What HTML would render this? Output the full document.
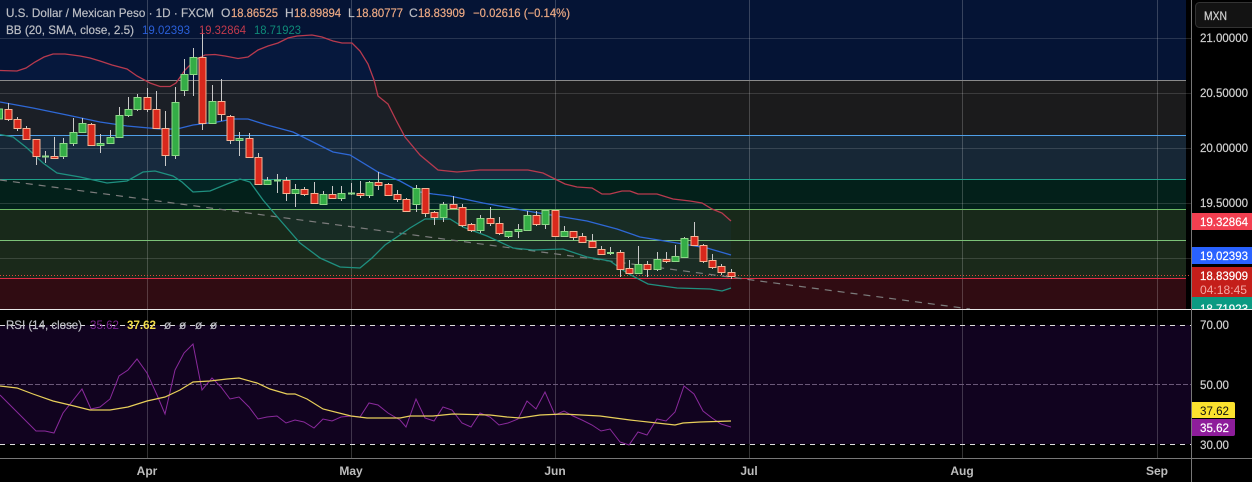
<!DOCTYPE html>
<html><head><meta charset="utf-8"><style>
html,body{margin:0;padding:0;background:#000;width:1252px;height:482px;overflow:hidden}
svg{display:block}
text{font-family:"Liberation Sans",sans-serif;font-size:12px}
.g{fill:#bcbec4;stroke:#bcbec4;stroke-width:.2}.o{fill:#eaa883;stroke:#eaa883;stroke-width:.2}.a{fill:#d0d0d0;stroke:#d0d0d0;stroke-width:.2}.w{fill:#fff;stroke:#fff;stroke-width:.2}
.t{fill:#bdbdbd;font-weight:bold;text-anchor:middle}
</style></head><body>
<svg width="1252" height="482" viewBox="0 0 1252 482" xmlns="http://www.w3.org/2000/svg">
<rect width="1252" height="482" fill="#000"/>
<!-- bands -->
<rect x="0" y="0" width="1186" height="80" fill="#051435"/>
<rect x="0" y="80" width="1186" height="55" fill="#1b1b1c"/>
<rect x="0" y="135" width="1186" height="44" fill="#172736"/>
<rect x="0" y="179" width="1186" height="30" fill="#03201a"/>
<rect x="0" y="209" width="1186" height="31" fill="#18291a"/>
<rect x="0" y="240" width="1186" height="38" fill="#1a291a"/>
<rect x="0" y="278" width="1186" height="31" fill="#300c12"/>
<rect x="0" y="325" width="1191" height="119" fill="#11031f"/>
<!-- BB fill -->
<polygon fill="#2a6ad0" fill-opacity=".06" points="0,70.5 17,71 26,68 35,62 44,57 53,54 65,54 80,56 90,58 100,61 112,65 127,69 137,76 150,83 160,86.5 170,86.5 176,83 185,70 195,60 205,55 215,54.5 225,56 238,58.5 248,57 258,50 268,46 278,43 288,38 297,36 312,35 322,37 333,41 342,43 352,43 360,51 368,64 374,80 378,96 388,104 396,120 405,137 420,155 438,170 457,172 480,170 528,170 543,173 557,180 565,184 577,187 592,188 602,194 610,194 622,191 630,191 638,194 657,194 673,199 690,201 702,203 712,209 722,213 731,221 731,288 722,291 710,289 677,288 648,284 627,273 610,261 587,257 563,249 533,250 513,248 487,236 463,227 450,219 425,219 410,228 400,235 385,245 372,258 360,268 340,267 320,258 300,243 280,220 263,200 250,182 240,179 227,184 210,191 193,192 182,182 173,176 155,171 143,172 127,181 107,183 80,177 57,173 43,163 27,148 13,137 0,134.5"/>
<!-- grid -->
<g stroke="#fff" stroke-opacity=".14" stroke-width="1" fill="none">
<path d="M0 38.5H1191M0 93.5H1191M0 148.5H1191M0 203.5H1191M0 258.5H1191"/>
<path d="M147.5 0V458M351.5 0V458M555.5 0V458M749.5 0V458M962.5 0V458M1157.5 0V458" stroke-opacity=".2"/>
</g>
<!-- fib lines -->
<g fill="none" stroke-width="1">
<path d="M0 80.5H1186" stroke="#8a8a8a"/>
<path d="M0 135.5H1186" stroke="#4f9fe8"/>
<path d="M0 179.5H1186" stroke="#1fa08a"/>
<path d="M0 209.5H1186" stroke="#6cb865"/>
<path d="M0 240.5H1186" stroke="#7cc278"/>
<path d="M0 278.5H1186" stroke="#e02f48"/>
<path d="M0 275.5H1191" stroke="#d8483c" stroke-dasharray="1 2"/>
<path d="M0 180L970 309" stroke="#7c7c7c" stroke-width="1.2" stroke-dasharray="7 6"/>
</g>
<!-- BB lines -->
<g fill="none" stroke-width="1.3">
<polyline stroke="#b83a4e" points="0,70.5 17,71 26,68 35,62 44,57 53,54 65,54 80,56 90,58 100,61 112,65 127,69 137,76 150,83 160,86.5 170,86.5 176,83 185,70 195,60 205,55 215,54.5 225,56 238,58.5 248,57 258,50 268,46 278,43 288,38 297,36 312,35 322,37 333,41 342,43 352,43 360,51 368,64 374,80 378,96 388,104 396,120 405,137 420,155 438,170 457,172 480,170 528,170 543,173 557,180 565,184 577,187 592,188 602,194 610,194 622,191 630,191 638,194 657,194 673,199 690,201 702,203 712,209 722,213 731,221"/>
<polyline stroke="#2e68d6" points="0,102 33,108 67,115 100,122 127,126 160,129 177,129 193,125 217,122 233,119 248,119 267,125 293,132 333,152 350,155 378,172 400,181 420,192 433,194 450,196 483,203 533,212 587,221 617,229 640,237 677,243 707,248 731,255"/>
<polyline stroke="#1f9080" points="0,134.5 13,137 27,148 43,163 57,173 80,177 107,183 127,181 143,172 155,171 173,176 182,182 193,192 210,191 227,184 240,179 250,182 263,200 280,220 300,243 320,258 340,267 360,268 372,258 385,245 400,235 410,228 425,219 450,219 463,227 487,236 513,248 533,250 563,249 587,257 610,261 627,273 648,284 677,288 710,289 722,291 731,288"/>
</g>
<!-- wicks -->
<path fill="none" stroke="#c9c9c9" stroke-width="1" d="M8.5 103V121M17.5 117V131M26.5 126V140M36.5 139V165M45.5 151V163M54.5 137V159M63.5 138V159M73.5 118V146M82.5 118V133M91.5 123V146M100.5 134V153M110.5 130V144M119.5 107V138M128.5 97V117M137.5 94V111M147.5 88V112M156.5 91V129M165.5 111V166M175.5 87V159M184.5 59V96M193.5 48V96M202.5 29V130M212.5 85V124M221.5 79V121M230.5 115V144M239.5 132V156M249.5 133V158M258.5 153V185M267.5 177V185M277.5 174V193M286.5 177V201M295.5 184V207M304.5 187V196M314.5 182V204M323.5 191V205M332.5 186V199M341.5 186V201M351.5 183V195M360.5 181V198M369.5 181V198M378.5 172V190M388.5 183V196M397.5 190V202M406.5 198V212M416.5 185V212M425.5 188V217M434.5 211V225M443.5 202V222M453.5 196V209M462.5 204V227M471.5 223V232M480.5 215V233M490.5 207V226M499.5 217V235M508.5 231V238M518.5 224V238M527.5 211V230M536.5 211V226M545.5 210V229M555.5 210V237M564.5 226V237M573.5 231V240M582.5 233V243M592.5 234V248M601.5 246V255M610.5 247V255M620.5 250V277M629.5 260V274M638.5 246V273M647.5 261V277M657.5 252V271M666.5 252V263M675.5 245V261M684.5 237V258M694.5 222V246M703.5 244V263M712.5 254V269M721.5 264V275M731.5 269V279"/>
<!-- green bodies -->
<path fill="#34ad46" stroke="#8ed888" stroke-width="1" d="M-3.5 109h6v10h-6zM60 143.5h7v13h-7zM70 132.5h7v11h-7zM79 123.5h7v9h-7zM97 143.5h7v2h-7zM107 137.5h7v6h-7zM116 115.5h7v22h-7zM125 109.5h7v6h-7zM134 97.5h7v12h-7zM172 102.5h7v53h-7zM181 74.5h7v16h-7zM190 57.5h7v17h-7zM209 101.5h7v22h-7zM236 138.5h7v2h-7zM264 180.5h7v4h-7zM292 189.5h7v4h-7zM320 194.5h7v10h-7zM338 193.5h7v5h-7zM366 182.5h7v13h-7zM413 188.5h7v16h-7zM440 204.5h7v13h-7zM477 218.5h7v12h-7zM505 231.5h7v5h-7zM515 229.5h7v2h-7zM524 215.5h7v15h-7zM542 210.5h7v14h-7zM561 231.5h7v5h-7zM635 264.5h7v9h-7zM654 259.5h7v10h-7zM672 256.5h7v5h-7zM681 238.5h7v19h-7z"/>
<path fill="none" stroke="#8ed888" stroke-width="2" d="M42 156.5h7M274 180.5h7M348 193.5h7M607 253h7"/>
<!-- red bodies -->
<path fill="#d9281c" stroke="#f6b394" stroke-width="1" d="M5 109.5h7v10h-7zM14 119.5h7v9h-7zM23 128.5h7v11h-7zM33 139.5h7v17h-7zM51 156.5h7v2h-7zM88 124.5h7v21h-7zM144 97.5h7v12h-7zM153 109.5h7v19h-7zM162 128.5h7v27h-7zM199 57.5h7v66h-7zM218 101.5h7v13h-7zM227 116.5h7v24h-7zM246 138.5h7v19h-7zM255 157.5h7v27h-7zM283 180.5h7v13h-7zM301 189.5h7v5h-7zM311 193.5h7v10h-7zM329 194.5h7v4h-7zM357 193.5h7v2h-7zM375 182.5h7v3h-7zM385 184.5h7v11h-7zM394 194.5h7v5h-7zM403 199.5h7v12h-7zM422 188.5h7v25h-7zM431 212.5h7v5h-7zM450 204.5h7v4h-7zM459 207.5h7v18h-7zM468 224.5h7v6h-7zM487 218.5h7v5h-7zM496 223.5h7v10h-7zM533 215.5h7v9h-7zM552 210.5h7v26h-7zM570 231.5h7v6h-7zM579 236.5h7v6h-7zM589 241.5h7v6h-7zM598 249.5h7v5h-7zM617 252.5h7v17h-7zM626 268.5h7v5h-7zM644 264.5h7v5h-7zM663 259.5h7v2h-7zM691 236.5h7v9h-7zM700 245.5h7v16h-7zM709 260.5h7v7h-7zM718 266.5h7v6h-7zM728 272.5h7v4h-7z"/>
<!-- RSI -->
<path d="M0 325.5H1191M0 444.5H1191" stroke="#ddd" stroke-dasharray="5 5" fill="none"/>
<path d="M0 384.5H1191" stroke="#6a5878" stroke-dasharray="5 2" fill="none"/>
<polyline fill="none" stroke="#8a2a9c" stroke-width="1" points="0,395 36,431 45,431 54,433 63,413 82,389 91,409 100,407 110,399 119,376 128,370 137,359 147,373 157,395 165,414 175,370 184,353 193,344 202,390 212,378 221,387 230,399 239,397 249,407 258,419 267,417 277,416 286,423 295,420 304,422 314,428 323,419 332,421 341,417 351,416 360,417 369,403 378,405 388,413 400,420 406,427 416,399 425,418 434,421 443,407 452,410 462,423 471,427 480,413 490,417 499,425 508,423 518,419 527,401 536,409 545,392 555,415 564,411 573,416 582,420 592,425 601,431 610,429 620,442 629,445 638,432 647,435 657,419 666,421 675,412 684,386 694,394 703,411 712,418 721,424 731,427"/>
<polyline fill="none" stroke="#e8cf5a" stroke-width="1.2" points="0,386 17,388 33,394 53,401 70,405 90,410 110,410 128,407 147,401 165,397 180,390 193,382 210,381 227,379 239,378 257,383 270,389 287,394 295,394 307,399 323,409 351,416 367,418 400,418 410,416 433,416 453,414 490,415 507,417 520,418 540,415 563,414 600,416 630,420 657,423 675,425 683,423 700,422 731,421"/>
<!-- separators -->
<rect x="0" y="309" width="1252" height="1" fill="#e8e8e8"/>
<rect x="0" y="458" width="1252" height="1" fill="#777"/>
<rect x="1191" y="0" width="1" height="482" fill="#777"/>
<!-- legend -->
<text class="g" x="6" y="17" textLength="208" lengthAdjust="spacingAndGlyphs">U.S. Dollar / Mexican Peso · 1D · FXCM</text>
<text class="g" x="221" y="17">O</text><text class="o" x="231" y="17" textLength="47" lengthAdjust="spacingAndGlyphs">18.86525</text>
<text class="g" x="285" y="17">H</text><text class="o" x="294" y="17" textLength="47" lengthAdjust="spacingAndGlyphs">18.89894</text>
<text class="g" x="348" y="17">L</text><text class="o" x="356" y="17" textLength="47" lengthAdjust="spacingAndGlyphs">18.80777</text>
<text class="g" x="409" y="17">C</text><text class="o" x="418" y="17" textLength="47" lengthAdjust="spacingAndGlyphs">18.83909</text>
<text class="o" x="473" y="17" textLength="97" lengthAdjust="spacingAndGlyphs">−0.02616 (−0.14%)</text>
<text class="g" x="6" y="34" textLength="128" lengthAdjust="spacingAndGlyphs">BB (20, SMA, close, 2.5)</text>
<text x="142" y="34" fill="#2a5fd8" textLength="48" lengthAdjust="spacingAndGlyphs">19.02393</text>
<text x="199" y="34" fill="#c23a4c" textLength="47" lengthAdjust="spacingAndGlyphs">19.32864</text>
<text x="254" y="34" fill="#0f8a78" textLength="47" lengthAdjust="spacingAndGlyphs">18.71923</text>
<text class="g" x="6" y="329" textLength="76" lengthAdjust="spacingAndGlyphs">RSI (14, close)</text>
<text x="90" y="329" fill="#7a2490" textLength="29" lengthAdjust="spacingAndGlyphs">35.62</text>
<text x="127" y="329" fill="#f2dc4a" font-weight="bold" textLength="29" lengthAdjust="spacingAndGlyphs">37.62</text>
<text class="g" x="164" y="329">ø</text><text class="g" x="179" y="329">ø</text><text class="g" x="195" y="329">ø</text><text class="g" x="210" y="329">ø</text>
<!-- axis -->
<rect x="1195.5" y="2.5" width="60" height="25" rx="4" fill="#131313" stroke="#333"/>
<text class="a" x="1204" y="20" textLength="23" lengthAdjust="spacingAndGlyphs">MXN</text>
<text class="a" x="1200" y="42" textLength="48" lengthAdjust="spacingAndGlyphs">21.00000</text>
<text class="a" x="1200" y="97" textLength="48" lengthAdjust="spacingAndGlyphs">20.50000</text>
<text class="a" x="1200" y="152" textLength="48" lengthAdjust="spacingAndGlyphs">20.00000</text>
<text class="a" x="1200" y="207" textLength="48" lengthAdjust="spacingAndGlyphs">19.50000</text>
<rect x="1192" y="213" width="60" height="17" fill="#f23f50"/>
<text class="w" x="1200" y="226" textLength="48" lengthAdjust="spacingAndGlyphs">19.32864</text>
<rect x="1192" y="247" width="60" height="17" fill="#2962ff"/>
<text class="w" x="1200" y="260" textLength="48" lengthAdjust="spacingAndGlyphs">19.02393</text>
<rect x="1192" y="267" width="60" height="30" fill="#c41e1a"/>
<text class="w" x="1200" y="280" textLength="48" lengthAdjust="spacingAndGlyphs">18.83909</text>
<text x="1200" y="294" fill="#f4a8a4" textLength="47" lengthAdjust="spacingAndGlyphs">04:18:45</text>
<svg x="1192" y="297" width="60" height="12"><rect width="60" height="12" fill="#0b9a82"/><text class="w" x="8" y="16" textLength="48" lengthAdjust="spacingAndGlyphs">18.71923</text></svg>
<text class="a" x="1200" y="329" textLength="29" lengthAdjust="spacingAndGlyphs">70.00</text>
<text class="a" x="1200" y="389" textLength="29" lengthAdjust="spacingAndGlyphs">50.00</text>
<path d="M1192 402h41a2 2 0 0 1 2 2v14h-43z" fill="#fbe22e"/>
<text x="1200" y="415" fill="#111" textLength="29" lengthAdjust="spacingAndGlyphs">37.62</text>
<path d="M1192 419h43v15a2 2 0 0 1-2 2h-41z" fill="#8e1d9b"/>
<text class="w" x="1200" y="432" textLength="29" lengthAdjust="spacingAndGlyphs">35.62</text>
<text class="a" x="1200" y="449" textLength="29" lengthAdjust="spacingAndGlyphs">30.00</text>
<!-- time -->
<text class="t" x="147" y="475">Apr</text>
<text class="t" x="351" y="475">May</text>
<text class="t" x="555" y="475">Jun</text>
<text class="t" x="749" y="475">Jul</text>
<text class="t" x="962" y="475">Aug</text>
<text class="t" x="1157" y="475">Sep</text>
</svg>
</body></html>
